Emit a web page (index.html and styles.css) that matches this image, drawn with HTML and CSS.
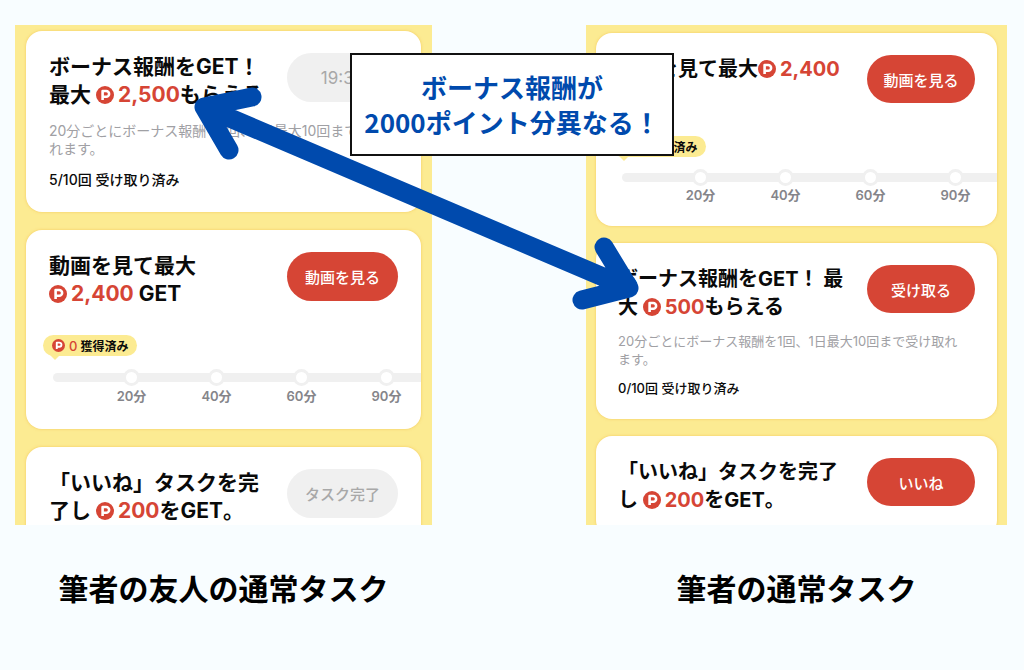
FILE: index.html
```html
<!DOCTYPE html>
<html lang="ja">
<head>
    <meta charset="UTF-8">
    <meta name="viewport" content="width=device-width, initial-scale=1.0">
    <title>通常タスクの比較</title>
    <link rel="stylesheet" href="styles.css">
</head>
<body>

    <!-- コインアイコン -->
    <svg class="sprite" aria-hidden="true">
        <symbol id="coin" viewBox="0 0 18 18">
            <circle cx="9" cy="9" r="9" fill="#d64535"/>
            <path d="M6.6 14V5h3.6a2.9 2.9 0 0 1 0 5.8H7" fill="none" stroke="#fff" stroke-width="2.6" stroke-linejoin="round"/>
        </symbol>
    </svg>

    <main class="compare">

        <!-- 友人のタスク -->
        <figure class="column friend">
            <div class="panel">
                <section class="card">
                    <div class="card-head">
                        <h2>ボーナス報酬をGET！<br>最大 <span class="point"><svg class="coin"><use href="#coin"/></svg>2,500</span>もらえる</h2>
                        <button class="btn timer" type="button" disabled>19:39</button>
                    </div>
                    <p class="note">20分ごとにボーナス報酬を1回、1日最大10回まで受け取<br>れます。</p>
                    <p class="status">5/10回 受け取り済み</p>
                </section>

                <section class="card">
                    <div class="card-head">
                        <h2>動画を見て最大<br><span class="point"><svg class="coin"><use href="#coin"/></svg>2,400</span> GET</h2>
                        <button class="btn" type="button">動画を見る</button>
                    </div>
                    <div class="badge"><svg class="coin"><use href="#coin"/></svg><span class="num">0</span>獲得済み</div>
                    <div class="track">
                        <div class="bar"></div>
                        <ol class="steps">
                            <li>20分</li>
                            <li>40分</li>
                            <li>60分</li>
                            <li>90分</li>
                        </ol>
                    </div>
                </section>

                <section class="card">
                    <div class="card-head">
                        <h2>「いいね」タスクを完<br>了し <span class="point"><svg class="coin"><use href="#coin"/></svg>200</span>をGET。</h2>
                        <button class="btn" type="button" disabled>タスク完了</button>
                    </div>
                </section>
            </div>
            <figcaption>筆者の友人の通常タスク</figcaption>
        </figure>

        <!-- 筆者のタスク -->
        <figure class="column author">
            <div class="panel">
                <section class="card">
                    <div class="card-head">
                        <h2>動画を見て最大<span class="point"><svg class="coin"><use href="#coin"/></svg>2,400</span><br>GET</h2>
                        <button class="btn" type="button">動画を見る</button>
                    </div>
                    <div class="badge"><svg class="coin"><use href="#coin"/></svg><span class="num">0</span>獲得済み</div>
                    <div class="track">
                        <div class="bar"></div>
                        <ol class="steps">
                            <li>20分</li>
                            <li>40分</li>
                            <li>60分</li>
                            <li>90分</li>
                        </ol>
                    </div>
                </section>

                <section class="card">
                    <div class="card-head">
                        <h2>ボーナス報酬をGET！ 最<br>大 <span class="point"><svg class="coin"><use href="#coin"/></svg>500</span>もらえる</h2>
                        <button class="btn" type="button">受け取る</button>
                    </div>
                    <p class="note">20分ごとにボーナス報酬を1回、1日最大10回まで受け取れ<br>ます。</p>
                    <p class="status">0/10回 受け取り済み</p>
                </section>

                <section class="card">
                    <div class="card-head">
                        <h2>「いいね」タスクを完了<br>し <span class="point"><svg class="coin"><use href="#coin"/></svg>200</span>をGET。</h2>
                        <button class="btn" type="button">いいね</button>
                    </div>
                </section>
            </div>
            <figcaption>筆者の通常タスク</figcaption>
        </figure>

        <!-- 矢印と吹き出し -->
        <svg class="arrow" viewBox="0 0 1024 670" aria-hidden="true">
            <path d="M204 107L629 288M252 97L204 107L229 150M604 247L629 288L582 300"/>
        </svg>
        <p class="callout">ボーナス報酬が<br>2000ポイント分異なる！</p>
    </main>

</body>
</html>
```

FILE: styles.css
```css
/* 全体 */
body {
    margin: 0;
    background-color: #f8fdff;
    color: #0a0a0a;
    font-family: Inter, 'Noto Sans CJK JP', sans-serif;
}

h2,
p,
figure,
ol {
    margin: 0;
    padding: 0;
}

.sprite {
    display: block;
    width: 0;
    height: 0;
}

/* 2カラム */
.compare {
    position: relative;
    display: grid;
    grid-template-columns: 417fr 421fr;
    column-gap: 154px;
    padding: 25px 17px 0 15px;
}

.column {
    min-width: 0;
}

/* サイズは左右で少し違う */
.friend {
    --title: 21px;
    --text: 14px;
    --gap: 13px;
    --side: 11px;
    --top: 6px;
    --between: 18px;
    --pad: 23px;
    --btn-w: 111px;
    --btn-h: 49px;
    --badge-gap: 27px;
    --track-gap: 13px;
    --label: 20px;
}

.author {
    --title: 20px;
    --text: 13px;
    --gap: 11px;
    --side: 10px;
    --top: 8px;
    --between: 17px;
    --pad: 22px;
    --btn-w: 108px;
    --btn-h: 48px;
    --badge-gap: 25px;
    --track-gap: 12px;
    --label: 18px;
}

.panel {
    display: flex;
    flex-direction: column;
    gap: var(--between);
    box-sizing: border-box;
    max-height: 500px;
    padding: var(--top) var(--side) 0;
    background-color: #fceb92;
    overflow: hidden;
}

/* カード */
.card {
    flex: none;
    padding: 22px var(--pad) var(--pad);
    border-radius: 16px;
    background-color: #fff;
    box-shadow: 0 0 3px rgba(240, 180, 60, 0.6);
    overflow: hidden;
}

.card-head {
    display: flex;
    justify-content: space-between;
    align-items: flex-start;
}

.card h2 {
    font-size: var(--title);
    font-weight: 700;
    line-height: 28px;
    white-space: nowrap;
}

.point {
    color: #d64535;
}

.coin {
    width: 18px;
    height: 18px;
    margin-right: 4px;
    vertical-align: -2px;
}

.btn {
    flex: none;
    width: var(--btn-w);
    height: var(--btn-h);
    padding: 0;
    border: none;
    border-radius: 25px;
    background-color: #d64535;
    color: #fff;
    font-family: inherit;
    font-size: 15px;
    font-weight: 500;
    cursor: pointer;
}

.btn:disabled {
    background-color: #f0f0f0;
    color: #a8a8a8;
    cursor: default;
}

.btn.timer {
    font-size: 17px;
    font-weight: 400;
}

.note,
.status {
    margin-top: var(--gap);
    font-size: var(--text);
    line-height: 18px;
    white-space: nowrap;
}

.note {
    color: #a0a0a4;
}

.status {
    font-weight: 500;
}

/* 獲得済みバッジ */
.badge {
    position: relative;
    display: flex;
    align-items: center;
    width: max-content;
    height: 21px;
    margin: var(--badge-gap) 0 0 -6px;
    padding: 0 9px;
    border-radius: 11px;
    background-color: #fceb92;
    font-size: 12px;
    font-weight: 700;
}

.badge::after {
    content: "";
    position: absolute;
    top: 20px;
    left: 7px;
    border: 5px solid transparent;
    border-top-color: #fceb92;
    border-bottom: 0;
}

.badge .coin {
    width: 13px;
    height: 13px;
}

.badge .num {
    margin-right: 3px;
    color: #d64535;
    font-size: 13px;
    font-weight: 500;
}

/* 進捗バー */
.track {
    display: grid;
    margin: var(--track-gap) calc(var(--pad) * -1) 0 4px;
}

.bar,
.steps {
    grid-area: 1 / 1;
    min-width: 0;
}

.bar {
    height: 9px;
    margin-top: 4px;
    border-radius: 5px 0 0 5px;
    background-color: #f0f0f0;
}

.steps {
    display: flex;
    padding-left: 36px;
    list-style: none;
}

.steps li {
    display: flex;
    flex: none;
    flex-direction: column;
    align-items: center;
    width: 85px;
    color: #85858a;
    font-size: 13px;
    font-weight: 600;
    line-height: var(--label);
}

.steps li::before {
    content: "";
    width: 11px;
    height: 11px;
    border: 3px solid #f0f0f0;
    border-radius: 50%;
    background-color: #fff;
}

/* キャプション */
figcaption {
    margin-top: 42px;
    color: #000;
    font-size: 30px;
    font-weight: 700;
    line-height: 44px;
    text-align: center;
}

/* 重ねる要素 */
.arrow {
    position: absolute;
    top: 0;
    left: 0;
    width: 100%;
    fill: none;
    stroke: #004aad;
    stroke-width: 19;
    stroke-linecap: round;
    stroke-linejoin: round;
    pointer-events: none;
}

.callout {
    position: absolute;
    top: 53px;
    left: 50%;
    box-sizing: border-box;
    width: 324px;
    padding: 14px 0 15px;
    border: 2px solid #111;
    background-color: #fff;
    color: #004aad;
    font-family: 'Noto Sans CJK JP', sans-serif;
    font-size: 26px;
    font-weight: 700;
    line-height: 35px;
    text-align: center;
    white-space: nowrap;
    transform: translateX(-50%);
}
```
